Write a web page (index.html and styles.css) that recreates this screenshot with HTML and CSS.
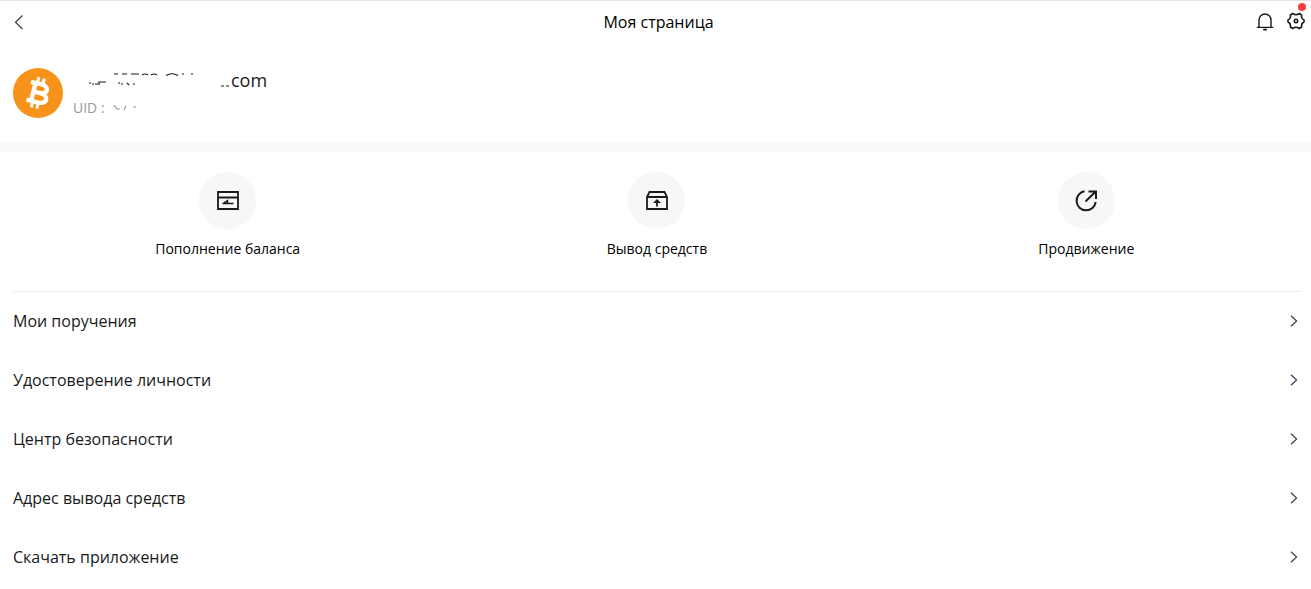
FILE: index.html
```
<!DOCTYPE html>
<html lang="ru">
<head>
	<meta charset="UTF-8">
	<meta name="viewport" content="width=device-width,initial-scale=1">
	<title>Моя страница</title>
	<link rel="stylesheet" href="styles.css">
</head>
<body>

<header class="top">
	<button class="icon-btn" type="button" aria-label="Назад">
		<svg width="12" height="18" viewBox="0 0 12 18"><path d="M10.5 2.5L3.5 9.2L10.5 16" fill="none" stroke="#33424f" stroke-width="1.2"/></svg>
	</button>
	<h1>Моя страница</h1>
	<div class="tools">
		<button class="icon-btn" type="button" aria-label="Уведомления">
			<svg width="18" height="20" viewBox="0 0 18 20" fill="none" stroke="#1a1a1a" stroke-width="1.4">
				<path d="M3 15V8a6 6 0 0 1 12 0V15M.8 15.4h16.4"/>
				<path d="M7.2 17.6h3.6" stroke-width="1.8"/>
			</svg>
		</button>
		<button class="icon-btn" type="button" aria-label="Настройки">
			<svg width="18" height="20" viewBox="0 0 18 20" fill="none" stroke="#1a1a1a" stroke-width="1.6" stroke-linejoin="round">
				<path d="M5.7 1.5Q9 4 12.3 1.5L14.6 3Q14 6.5 17 8V10Q14 11.5 14.6 15L12.3 16.5Q9 14 5.7 16.5L3.4 15Q4 11.5 1 10V8Q4 6.5 3.4 3Z"/>
				<circle cx="9" cy="9" r="1.7"/>
			</svg>
			<span class="dot"></span>
		</button>
	</div>
</header>

<section class="user">
	<svg class="avatar" width="50" height="50" viewBox="0 0 50 50">
		<circle cx="25" cy="25" r="25" fill="#f7931a"/>
		<g transform="rotate(14 25 25)" fill="none" stroke="#fff">
			<path d="M15.5 15.8H26.5C35 15.8 35 24.6 27 24.6H20M27 24.6C37 24.6 37 34.2 27.5 34.2H15.5M20.2 15.8V34.2" stroke-width="4.4"/>
			<path d="M22 9.5V15M27.6 9.5V15M22 35V40.5M27.6 35V40.5" stroke-width="3"/>
		</g>
	</svg>
	<div class="info">
		<p class="mail">
			<svg width="158" height="18" viewBox="0 0 158 18" fill="none" stroke="#1a1a1a" stroke-width="1.2">
				<path d="M41 3h4M49 3h5M58 3h8M69 4q3-2 6 0M78 4q3-2 6 0M93 4.5q6-3.5 12 0M109 3h2M118 3h2"/>
				<path d="M16 12h2M19 13h2M22 13h3M26 14v-3h7M45 12h2M48 13h2M54 12l2 2M60 13h2M148 15h3M153 15h3"/>
			</svg><span>com</span>
		</p>
		<p class="uid">
			<span>UID :</span>
			<svg width="26" height="10" viewBox="0 0 26 10" fill="none" stroke="#999" stroke-width="1.2"><path d="M2 3h2l2 3h3M13 7l2-4M22 4h3"/></svg>
		</p>
	</div>
</section>

<nav class="actions">
	<a href="#">
		<span class="round">
			<svg width="24" height="24" viewBox="0 0 24 24" fill="none" stroke="#1a1a1a" stroke-width="1.8">
				<path d="M2 3h20v17H2zM2 8.5h20"/>
				<path d="M6.5 14.5h11M7.5 14.4l4-2.8v2.8" stroke-width="1.5"/>
			</svg>
		</span>
		Пополнение баланса
	</a>
	<a href="#">
		<span class="round">
			<svg width="24" height="24" viewBox="0 0 24 24" fill="none" stroke="#1a1a1a" stroke-width="1.8">
				<path d="M2 8v12h20V8L19.5 3h-15zM2 8h20"/>
				<path d="M12 17.5v-5"/>
				<path d="M8 14L12 10l4 4z" fill="#1a1a1a" stroke="none"/>
			</svg>
		</span>
		Вывод средств
	</a>
	<a href="#">
		<span class="round">
			<svg width="24" height="24" viewBox="0 0 24 24" fill="none" stroke="#1a1a1a" stroke-width="2">
				<path d="M10.5 2.3A9.6 9.6 0 1 0 21.7 13M11.5 12.5L21.5 2.8M14.5 2.6h7.5v7.5"/>
			</svg>
		</span>
		Продвижение
	</a>
</nav>

<ul class="menu">
	<li><a href="#">Мои поручения <svg width="8" height="12" viewBox="0 0 8 12"><path d="M1 .8L6.6 6L1 11.2"/></svg></a></li>
	<li><a href="#">Удостоверение личности <svg width="8" height="12" viewBox="0 0 8 12"><path d="M1 .8L6.6 6L1 11.2"/></svg></a></li>
	<li><a href="#">Центр безопасности <svg width="8" height="12" viewBox="0 0 8 12"><path d="M1 .8L6.6 6L1 11.2"/></svg></a></li>
	<li><a href="#">Адрес вывода средств <svg width="8" height="12" viewBox="0 0 8 12"><path d="M1 .8L6.6 6L1 11.2"/></svg></a></li>
	<li><a href="#">Скачать приложение <svg width="8" height="12" viewBox="0 0 8 12"><path d="M1 .8L6.6 6L1 11.2"/></svg></a></li>
</ul>

</body>
</html>
```
FILE: styles.css
```
*{padding:0; margin:0; box-sizing:border-box;}
body{background:#fff; color:#1a1a1a; font-family:"Open Sans","Noto Sans",sans-serif; font-size:16px;}
a{color:inherit; text-decoration:none;}
svg{display:block; flex:none;}
ul{list-style:none;}

.top{display:grid; grid-template-columns:1fr auto 1fr; align-items:center; height:43px; padding:0 6px 0 12px; border-top:1px solid #e5e5e5;}
.top h1{font-size:16px; font-weight:400; color:#000;}
.icon-btn{position:relative; border:0; background:none; cursor:pointer; justify-self:start;}
.tools{display:flex; align-items:center; justify-content:flex-end; gap:13px;}
.dot{position:absolute; top:-9px; right:-1px; width:8px; height:8px; border-radius:50%; background:#fa3e3e;}

/* user */
.user{display:flex; align-items:flex-start; gap:10px; padding:25px 13px 23px; border-bottom:10px solid #fafafa;}
.mail{display:flex; align-items:center; font-size:18px; line-height:24px;}
.uid{display:flex; align-items:center; gap:6px; margin-top:5px; font-size:14px; line-height:22px; color:#999;}

/* actions */
.actions{display:grid; grid-template-columns:repeat(3,1fr); margin:0 10px 0 13px; padding:20px 0 32px; border-bottom:1px solid #ebebeb;}
.actions a{display:flex; flex-direction:column; align-items:center; gap:10px; font-size:14px; line-height:20px; color:#000;}
.round{display:flex; align-items:center; justify-content:center; width:57px; height:57px; border-radius:50%; background:#f7f7f7;}

/* menu */
.menu a{display:flex; align-items:center; justify-content:space-between; height:59px; padding:0 13px 2px;}
.menu path{fill:none; stroke:#33424f; stroke-width:1.2;}
```
